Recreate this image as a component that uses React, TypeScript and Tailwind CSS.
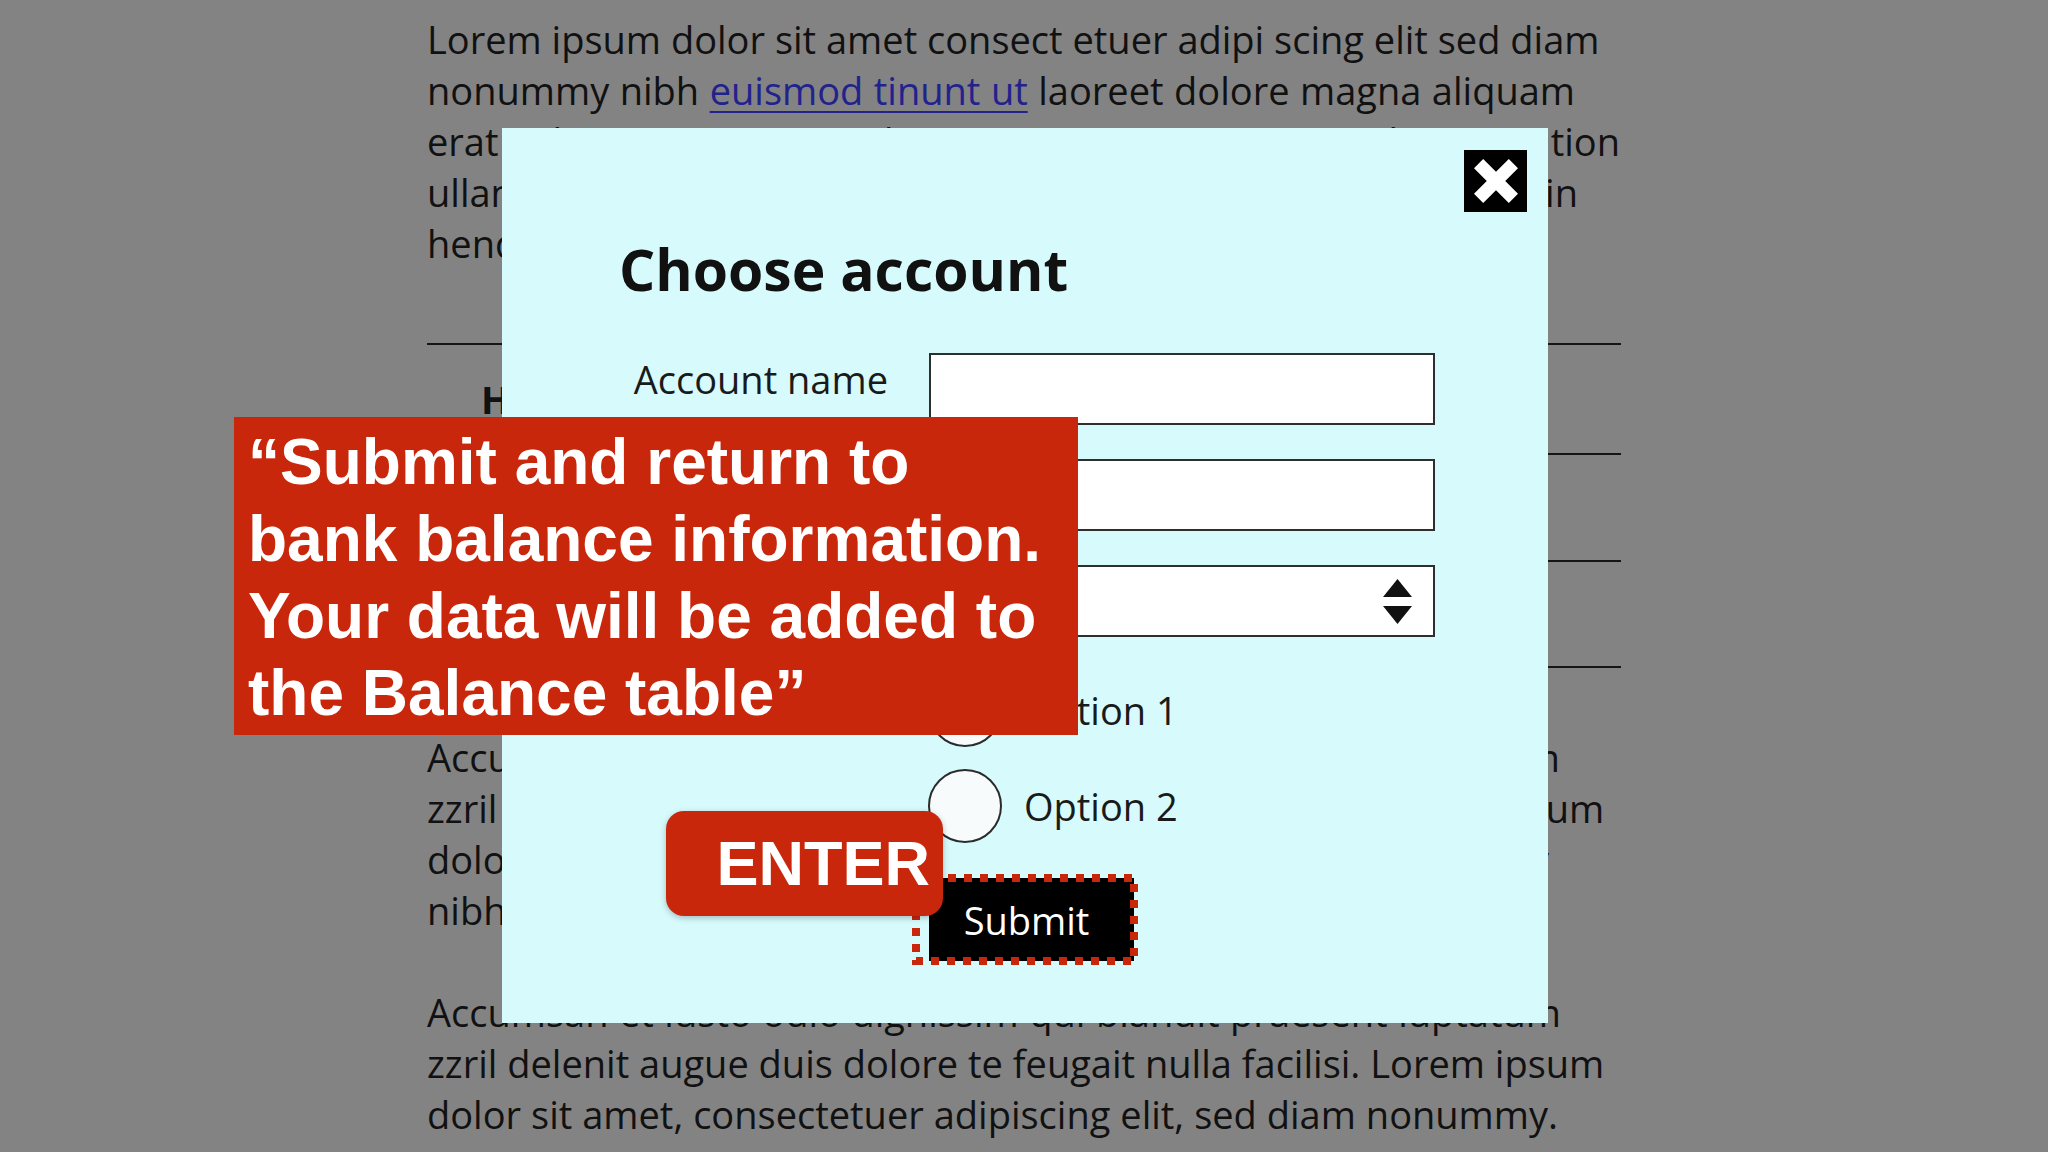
import React from 'react';

// one line of the dimmed document behind the dialog; width pins where the line ends
function DocLine({ w, children }: { w?: string; children: React.ReactNode }) {
  return (
    <div className={w ? `${w} whitespace-nowrap text-justify [text-align-last:justify]` : 'whitespace-nowrap'}>
      {children}
    </div>
  );
}

function CloseIcon() {
  return (
    <svg width="44" height="44" viewBox="0 0 44 44">
      <path d="M4.6 4.6 L39.4 39.4 M39.4 4.6 L4.6 39.4" stroke="#fff" strokeWidth="13" strokeLinecap="butt" />
    </svg>
  );
}

function SortArrows() {
  return (
    <svg width="29" height="45" viewBox="0 0 29 45">
      <polygon points="14.5,0 29,18 0,18" fill="#111" />
      <polygon points="0,27 29,27 14.5,45" fill="#111" />
    </svg>
  );
}

function Radio({ label }: { label: string }) {
  return (
    <label className="flex items-center gap-[22px]">
      <span className="w-[74px] h-[74px] rounded-full border-2 border-[#2b2b2b] bg-[#f7fbfb]" />
      <span className="text-[38px] leading-[52px] text-[#1a1a1a]">{label}</span>
    </label>
  );
}

export default function App() {
  return (
    <div className="relative w-[2048px] h-[1152px] overflow-hidden bg-[#838384] font-['Open_Sans',sans-serif]">
      {/* page behind the dialog */}
      <div className="ml-[427px] w-[1194px] pt-[14px] text-[38px] leading-[51px] text-[#111]">
        <div>
          <DocLine w="w-[1171px]">Lorem ipsum dolor sit amet consect etuer adipi scing elit sed diam</DocLine>
          <DocLine w="w-[1148px]">
            nonummy nibh{' '}
            <a href="#" className="text-[#22228c] underline decoration-2 underline-offset-[6px]">euismod tinunt ut</a>{' '}
            laoreet dolore magna aliquam
          </DocLine>
          <DocLine w="w-[1193px]">erat volutpat wisi enim ad minim veniam quis nostrud exercitation</DocLine>
          <DocLine w="w-[1151px]">ullamcorper suscipit lobortis nisl ut aliquip ex ea commodo in</DocLine>
          <DocLine>hendrerit in vulputate velit esse molestie consequat vel illum</DocLine>
        </div>

        <div className="mt-[74px] border-t-2 border-[#151515]">
          <div className="h-[110px] border-b-2 border-[#151515] flex items-center pl-[54px] font-bold">Holdings</div>
          <div className="h-[107px] border-b-2 border-[#151515]" />
          <div className="h-[106px] border-b-2 border-[#151515]" />
        </div>

        <div className="mt-[64px]">
          <DocLine w="w-[1133px]">Accumsan et iusto odio dignissim qui blandit praesent luptatum</DocLine>
          <DocLine w="w-[1177px]">zzril delenit augue duis dolore te feugait nulla facilisi. Lorem ipsum</DocLine>
          <DocLine w="w-[1122px]">dolore eu feugiat nulla facilisis at vero eros et iusto odio diy</DocLine>
          <DocLine>nibh euismod tincidunt ut laoreet dolore magna aliquam</DocLine>
        </div>

        <div className="mt-[51px]">
          <DocLine w="w-[1134px]">Accumsan et iusto odio dignissim qui blandit praesent luptatum</DocLine>
          <DocLine w="w-[1177px]">zzril delenit augue duis dolore te feugait nulla facilisi. Lorem ipsum</DocLine>
          <DocLine w="w-[1131px]">dolor sit amet, consectetuer adipiscing elit, sed diam nonummy.</DocLine>
        </div>
      </div>

      {/* dialog */}
      <div className="absolute left-[502px] top-[128px] w-[1046px] h-[895px] bg-[#d7fbfc]">
        <button className="absolute top-[22px] right-[21px] w-[63px] h-[62px] bg-black flex items-center justify-center">
          <CloseIcon />
        </button>

        <div className="flex flex-col pt-[106px]">
          <h2 className="pl-[117px] text-[57px] leading-[70px] font-bold text-[#111]">Choose account</h2>

          <div className="mt-[49px] grid grid-cols-[427px_506px] gap-y-[34px]">
            <div className="text-right pr-[41px] text-[38px] leading-[52px] text-[#1a1a1a]">Account name</div>
            <div className="h-[72px] border-2 border-[#2e2e2e] bg-white" />
            <div />
            <div className="h-[72px] border-2 border-[#2e2e2e] bg-white" />
            <div />
            <div className="h-[72px] border-2 border-[#2e2e2e] bg-white flex items-center justify-end pr-[21px]">
              <SortArrows />
            </div>
          </div>

          <div className="pl-[426px] mt-[36px] flex flex-col gap-[22px]">
            <Radio label="Option 1" />
            <Radio label="Option 2" />
          </div>

          <div className="pl-[427px] mt-[35px]">
            <div className="relative w-[205px] h-[83px]">
              <button className="w-full h-full bg-black text-white text-[38px] leading-[52px] pr-[10px]">Submit</button>
              <svg className="absolute left-[-17px] top-[-4px] pointer-events-none" width="226" height="91" viewBox="0 0 226 91">
                <rect x="4" y="4" width="218" height="83" fill="none" stroke="#c9270b" strokeWidth="8" strokeDasharray="8 8" />
              </svg>
            </div>
          </div>
        </div>
      </div>

      {/* annotation callouts */}
      <div className="absolute left-[234px] top-[417px] w-[844px] h-[318px] bg-[#c9270b] pl-[14px] pt-[7px] font-['Liberation_Sans',Arial,sans-serif] font-bold text-white text-[64px] leading-[77px]">
        <div>“Submit and return to</div>
        <div>bank balance information.</div>
        <div>Your data will be added to</div>
        <div>the Balance table”</div>
      </div>

      <div className="absolute left-[666px] top-[811px] w-[277px] h-[105px] rounded-[18px] bg-[#c9270b] shadow-[0_2px_6px_rgba(0,0,0,0.25)] flex items-center justify-end pr-[13px] font-['Liberation_Sans',Arial,sans-serif] font-bold text-white text-[63px] leading-none">
        ENTER
      </div>
    </div>
  );
}
